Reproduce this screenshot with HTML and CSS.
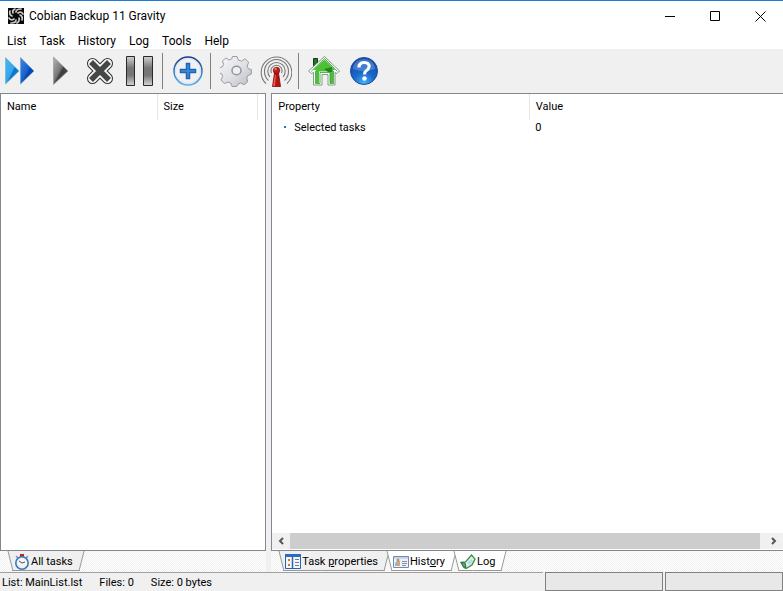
FILE: index.html
```html
<!DOCTYPE html>
<html lang="en">
<head>
<meta charset="utf-8">
<title>Cobian Backup 11 Gravity</title>
<link rel="stylesheet" href="styles.css">
</head>
<body>
<header class="titlebar">
  <svg class="app-icon" viewBox="0 0 16 16"><rect width="16" height="16" fill="#080808"/><g fill="none" stroke="#c8c8c8" stroke-width="1.700" stroke-linecap="round"><path d="M7 1Q4 2 5 5"/><path d="M13 1Q8 1 8 4"/><path d="M15 6Q13 3 10 5"/><path d="M14 12Q15 8 12 7"/><path d="M9 15Q12 13 11 10"/><path d="M3 15Q8 15 8 12"/><path d="M1 10Q3 13 6 11"/><path d="M2 3Q1 7 4 8"/></g></svg>
  <h1 class="title">Cobian Backup 11 Gravity</h1>
  <div class="window-controls">
    <button aria-label="Minimize"><svg viewBox="0 0 11 11"><path d="M0 5.500h10"/></svg></button>
    <button aria-label="Maximize"><svg viewBox="0 0 11 11"><path d="M.5.5h9v9h-9z"/></svg></button>
    <button aria-label="Close"><svg viewBox="0 0 11 11"><path d="M.5.5l10 10M10.500.5l-10 10"/></svg></button>
  </div>
</header>
<nav class="menu">
  <button>List</button><button>Task</button><button>History</button><button>Log</button><button>Tools</button><button>Help</button>
</nav>
<div class="toolbar">
  <button aria-label="Run all tasks"><svg viewBox="0 0 32 32"><defs><linearGradient id="lb" x2="1" y2="1"><stop stop-color="#4db5ee"/><stop offset=".5" stop-color="#35a5ea"/><stop offset=".55" stop-color="#0c73cd"/><stop offset="1" stop-color="#1586d9"/></linearGradient><linearGradient id="db" x2="1" y2="1"><stop stop-color="#4385df"/><stop offset=".5" stop-color="#1660cf"/><stop offset=".55" stop-color="#0748b1"/><stop offset="1" stop-color="#0a49b5"/></linearGradient></defs><path d="M1.500 2.500V29L15 16z" fill="url(#lb)" stroke="#6bb4df" stroke-width=".7"/><path d="M16.500 2.500V29L30 16z" fill="url(#db)" stroke="#6f9cd8" stroke-width=".7"/></svg></button>
  <button aria-label="Run selected tasks"><svg viewBox="0 0 32 32"><defs><linearGradient id="gr" x2="1" y2="1"><stop stop-color="#b5b5b5"/><stop offset=".45" stop-color="#777"/><stop offset=".55" stop-color="#3c3f3c"/><stop offset="1" stop-color="#555"/></linearGradient></defs><path d="M9.500 2V29.500L24 16z" fill="url(#gr)" stroke="#999" stroke-width=".7"/></svg></button>
  <button aria-label="Abort"><svg viewBox="0 0 32 32" fill="none" stroke-linecap="round" stroke-linejoin="round"><g stroke="#333" stroke-width="11"><path d="M8.500 8.500l15 15M23.500 8.500l-15 15"/></g><g stroke="#f8f8f8" stroke-width="9"><path d="M8.500 8.500l15 15M23.500 8.500l-15 15"/></g><g stroke="#444745" stroke-width="5.500" stroke-linecap="butt"><path d="M7 7l18 18M25 7L7 25"/></g></svg></button>
  <button aria-label="Pause"><svg viewBox="0 0 32 32"><defs><linearGradient id="pa" x2="0" y2="1"><stop stop-color="#d0d0d8"/><stop offset=".4" stop-color="#757575"/><stop offset=".65" stop-color="#777"/><stop offset="1" stop-color="#d5d5d5"/></linearGradient></defs><g fill="url(#pa)" stroke="#292929"><path d="M2.500 1.500h8v29h-8zM19.500 1.500h9v29h-9z"/></g></svg></button>
  <span class="separator"></span>
  <button aria-label="New task"><svg viewBox="0 0 32 32"><defs><linearGradient id="ring" x2="0" y2="1"><stop stop-color="#163f87"/><stop offset="1" stop-color="#55b0f0"/></linearGradient></defs><circle cx="16" cy="16" r="14" fill="#f1f1f3" stroke="url(#ring)" stroke-width="1.500"/><circle cx="16" cy="16" r="12.500" fill="none" stroke="#dbe2ee"/><path d="M14.500 8.500h3v6h6v3h-6v6h-3v-6h-6v-3h6z" fill="#3c91da" stroke="#1f66b8" stroke-width="1.500"/></svg></button>
  <span class="separator"></span>
  <button aria-label="Options"><svg viewBox="0 0 32 32"><defs><linearGradient id="gear" x2="1" y2="1"><stop stop-color="#f8f8fa"/><stop offset=".55" stop-color="#dedfe5"/><stop offset="1" stop-color="#b9bac4"/></linearGradient></defs><path fill="url(#gear)" stroke="#92939a" stroke-width=".9" stroke-linejoin="round" d="M12.500 1.500h4.500l1.500 3.700 3.200 1L25 3.700l3.700 3.600-1.600 3.800 1.200 2.600 3 .8v4.500l-3.500 1.700-1 2.300 1 3.700-3.600 3-3.600-1.700-2.600 1.200-1.300 2.300h-4.600l-1.300-3.500-2.700-1-3.800 1.500-3.300-3.600 1.700-3.500-1-2.500-3.200-1.400.3-4.600 3.600-1 1.200-2.500-1.200-3.400 3.500-3 3.300 2 2.500-1z"/><ellipse cx="16.500" cy="15.500" rx="4.500" ry="4.300" fill="#f0f0f0" stroke="#94959d" stroke-width="1.500"/></svg></button>
  <button aria-label="Remote connection"><svg viewBox="0 0 32 32"><g fill="none" stroke="#777" stroke-width="1.100"><path d="M6 28.500A15.300 15.300 0 1 1 27 28.500M8.500 25.500A12 12 0 1 1 24.500 25.500M10 22A8.700 8.700 0 1 1 23 22M11.500 18A5.500 5.500 0 1 1 21.500 18"/></g><path d="M14.500 18h4l2 13.500h-8z" fill="#bb1210" stroke="#69100e" stroke-width=".8"/><path d="M15 20h1l-1 11h-2z" fill="#e95c53"/><circle cx="16.500" cy="15.500" r="3.200" fill="#c51812" stroke="#75130e" stroke-width=".8"/><circle cx="15.500" cy="14" r="1.200" fill="#f27568"/></svg></button>
  <span class="separator"></span>
  <button aria-label="Home page"><svg viewBox="0 0 32 32"><path d="M5.500 3.500h4v7h-4z" fill="#217525" stroke="#143916"/><path d="M16.500 1.500L31.500 16l-2.500 2.500-2-1V30H20V19.500h-6V30H5.500V17.500l-2 1L.5 16z" fill="#fff" stroke="#68836a" stroke-width=".8"/><path d="M16.500 4.500L27 14.500l-2 1V28h-3V16.500H11V28H8V15.500l-2.500-1z" fill="#4bc234"/><path d="M3 16.500L16.500 3.500 29.500 16.500M7.500 16v12.500H12V17.500h10v11h3.500V16" fill="none" stroke="#2f9a31" stroke-width=".8"/><path d="M16 14l8-2v5h-4z" fill="#23842b"/></svg></button>
  <button aria-label="Help"><svg viewBox="0 0 32 32"><defs><radialGradient id="help" cx=".5" cy=".95" r=".9"><stop stop-color="#44b5f5"/><stop offset=".45" stop-color="#1a66ca"/><stop offset="1" stop-color="#174aa5"/></radialGradient></defs><circle cx="16" cy="16" r="13.500" fill="url(#help)" stroke="#1c4d9f"/><path d="M5 14Q6 4 16 4T27 14Q16 18 5 14" fill="#7ba9e4" opacity=".45"/><path d="M11 12.500Q11 7.500 16 7.500 21.500 7.500 21 12 20.500 14.500 18 16 16.500 17 16.500 19.500" fill="none" stroke="#fff" stroke-width="3.200"/><circle cx="16.500" cy="23.500" r="2.200" fill="#fff"/></svg></button>
</div>
<main class="workspace">
  <section class="side tasks">
    <div class="panel">
      <table>
        <colgroup><col class="col-name"><col class="col-size"><col></colgroup>
        <thead><tr><th>Name</th><th>Size</th><th></th></tr></thead>
      </table>
    </div>
    <div class="tabs">
      <button class="tab active"><svg viewBox="0 0 16 16"><path d="M6 0h4v3H6z" fill="#c9201c"/><path d="M2 2l2 2M14 2l-2 2" stroke="#7c94b3" stroke-width="1.500"/><circle cx="8" cy="9" r="6.200" fill="#f4f5f2" stroke="#3d78bc" stroke-width="1.600"/><path d="M5 7l3 2 3-1" fill="none" stroke="#555"/></svg>All tasks</button>
    </div>
  </section>
  <section class="side details">
    <div class="panel open">
      <table>
        <colgroup><col class="col-property"><col></colgroup>
        <thead><tr><th>Property</th><th>Value</th></tr></thead>
        <tbody><tr><td class="item">Selected tasks</td><td>0</td></tr></tbody>
      </table>
      <div class="scrollbar">
        <button aria-label="Scroll left"><svg viewBox="0 0 8 8"><path d="M6 1L3 4l3 3"/></svg></button>
        <div class="thumb"></div>
        <button aria-label="Scroll right"><svg viewBox="0 0 8 8"><path d="M2 1l3 3-3 3"/></svg></button>
      </div>
    </div>
    <div class="tabs">
      <button class="tab active"><svg viewBox="0 0 16 16"><path d="M.5.5h15v14H.5z" fill="#f4f7fb" stroke="#2361ba"/><path d="M0 0h16v3H0z" fill="#2b69c2"/><path d="M7.500 3v11" stroke="#2d65ae" stroke-width="1.500"/><path d="M3 5h2v2H3zM3 10h2v2H3z" fill="#d97820"/><path d="M10 5.500h4M10 8.500h4M10 11.500h4" stroke="#677c99"/></svg><span>Task <u>p</u>roperties</span></button>
      <button class="tab"><svg viewBox="0 0 16 16"><path d="M.5 2.500h15v11H.5z" fill="#eef3fa" stroke="#7188b2"/><path d="M1 3h14v2H1z" fill="#c3d4ed"/><path d="M2 12V9l2-2h3v5z" fill="#8ab5de"/><circle cx="5" cy="6" r="1.500" fill="#d98a3b"/><path d="M5 9l2-1v4H4z" fill="#f0a33c"/><path d="M9 7.500h5M9 9.500h5M9 11.500h4" stroke="#8590a5"/></svg><span>Hist<u>o</u>ry</span></button>
      <button class="tab"><svg viewBox="0 0 16 16"><path d="M1 8.500l4.500-.5 6-7 3.500 4-3 6-6 3.500-2-1z" fill="#daf1df" stroke="#3a8e43" stroke-width="1.300"/><path d="M1 8.500l4 .5 1 4.500-2-.5z" fill="#62a0bd" stroke="#287035"/><path d="M7 9l4-4 2 2-3 4z" fill="#b8dbea"/></svg><span>Lo<u>g</u></span></button>
    </div>
  </section>
</main>
<footer class="statusbar">
  <div class="status-text"><span>List: MainList.lst</span><span>Files: 0</span><span>Size: 0 bytes</span></div>
  <div class="progress"></div>
  <div class="progress"></div>
</footer>
</body>
</html>
```
FILE: styles.css
```css
* { box-sizing: border-box; }

body {
  display: flex;
  flex-direction: column;
  height: 100vh;
  margin: 0;
  overflow: hidden;
  border-top: 1px solid #1a7fd4;
  background: #f0f0f0;
  color: #000;
  font: 11px/16px Roboto, "Open Sans", sans-serif;
}

button {
  margin: 0;
  padding: 0;
  border: 0;
  background: none;
  color: inherit;
  font: inherit;
}

svg { display: block; flex: none; }

.titlebar {
  display: flex;
  align-items: center;
  gap: 5px;
  height: 30px;
  padding-left: 8px;
  background: #fff;
}

.app-icon { width: 16px; height: 16px; }

.title {
  margin: 0;
  font-size: 12px;
  font-weight: 400;
}

.window-controls { display: flex; margin-left: auto; }

.window-controls button {
  display: grid;
  place-items: center;
  width: 45px;
  height: 30px;
}

.window-controls svg {
  width: 11px;
  height: 11px;
  fill: none;
  stroke: #000;
}

.menu {
  display: flex;
  height: 18px;
  background: #fff;
  font-size: 12px;
  line-height: 20px;
}

.menu button { padding: 0 6px 0 7px; }

.toolbar {
  display: flex;
  align-items: center;
  height: 44px;
}

.toolbar button {
  display: grid;
  place-items: center;
  width: 40px;
  height: 40px;
}

.toolbar svg { width: 32px; height: 32px; }

.separator {
  width: 8px;
  height: 36px;
  background: linear-gradient(#808080, #808080) 2px 0 / 1px 100% no-repeat;
}

.workspace {
  display: flex;
  flex: 1;
  gap: 5px;
  min-height: 0;
}

.side { display: flex; flex-direction: column; min-width: 0; }
.tasks { flex: 0 0 34%; }
.details { flex: 1; }

.panel {
  display: flex;
  flex: 1;
  flex-direction: column;
  border: 1px solid #828790;
  background: #fff;
}

.open { border-right: 0; }

table {
  width: 100%;
  border-collapse: collapse;
  table-layout: fixed;
}

.col-name { width: 156px; }
.col-size { width: 100px; }
.col-property { width: 257px; }

th, td {
  padding: 0 6px;
  font-weight: 400;
  text-align: left;
}

th { height: 26px; border-right: 1px solid #e5e5e5; }
th:last-child { border-right: 0; }
.item { padding-left: 22px; background: linear-gradient(#1979ca, #1979ca) 12px 6px / 2px 2px no-repeat; }

.scrollbar {
  display: flex;
  height: 16px;
  margin-top: auto;
  margin-bottom: 1px;
  background: #f0f0f0;
}

.scrollbar button {
  display: grid;
  place-items: center;
  width: 18px;
}

.scrollbar button:last-child { width: 23px; padding-left: 4px; }

.scrollbar svg {
  width: 8px;
  height: 8px;
  fill: none;
  stroke: #555;
  stroke-width: 2;
}

.thumb { flex: 1; background: #cdcdcd; }

.tabs {
  display: flex;
  gap: 2px;
  height: 21px;
  padding: 0 10px;
  background: repeating-conic-gradient(#fff 0 25%, #f0f0f0 0 50%) 0 0 / 2px 2px;
}

.tab {
  position: relative;
  display: flex;
  align-items: center;
  gap: 1px;
  height: 20px;
  padding: 1px 9px 0 4px;
  isolation: isolate;
}

.tab::before,
.tab::after {
  content: "";
  position: absolute;
  z-index: -1;
  top: 0;
  bottom: 0;
  border: 1px solid #999;
  border-top: 0;
  background: #fff;
}

.tab::before { left: 0; right: 50%; border-right: 0; transform: skewX(14deg); }
.tab::after { left: 40%; right: 0; border-left: 0; transform: skewX(-14deg); }
.active::before, .active::after { background: #f0f0f0; }
.tab svg { width: 16px; height: 16px; }
.tab u { text-underline-offset: 1px; }

.statusbar {
  display: flex;
  gap: 2px;
  height: 19px;
}

.status-text {
  display: flex;
  flex: 1;
  gap: 17px;
  padding-left: 2px;
  border-top: 1px solid #a0a0a0;
  line-height: 20px;
}

.progress {
  width: 118px;
  border: 1px solid #808080;
  background: #e8e8e8;
}
```
